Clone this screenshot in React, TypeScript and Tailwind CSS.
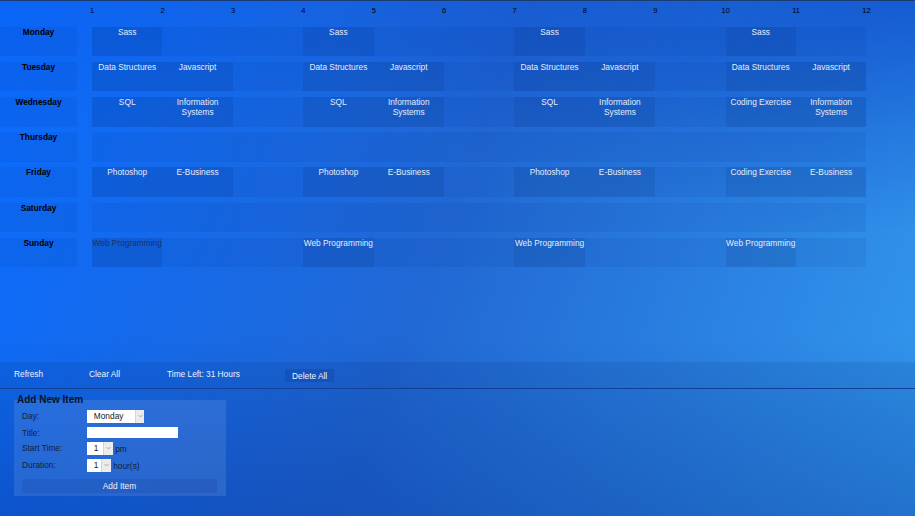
import { useState } from 'react'

type Slot = { title: string; dark?: boolean } | null

const s = (title: string, dark?: boolean): Slot => ({ title, dark })

const HOURS = Array.from({ length: 12 }, (_, i) => i + 1)

const DAYS: { name: string; slots: Slot[] }[] = [
  { name: 'Monday', slots: [s('Sass'), null, null, s('Sass'), null, null, s('Sass'), null, null, s('Sass'), null] },
  { name: 'Tuesday', slots: [s('Data Structures'), s('Javascript'), null, s('Data Structures'), s('Javascript'), null, s('Data Structures'), s('Javascript'), null, s('Data Structures'), s('Javascript')] },
  { name: 'Wednesday', slots: [s('SQL'), s('Information Systems'), null, s('SQL'), s('Information Systems'), null, s('SQL'), s('Information Systems'), null, s('Coding Exercise'), s('Information Systems')] },
  { name: 'Thursday', slots: Array(11).fill(null) },
  { name: 'Friday', slots: [s('Photoshop'), s('E-Business'), null, s('Photoshop'), s('E-Business'), null, s('Photoshop'), s('E-Business'), null, s('Coding Exercise'), s('E-Business')] },
  { name: 'Saturday', slots: Array(11).fill(null) },
  { name: 'Sunday', slots: [s('Web Programming', true), null, null, s('Web Programming'), null, null, s('Web Programming'), null, null, s('Web Programming'), null] },
]

function Chevron() {
  return (
    <svg width="5" height="4" viewBox="0 0 5 4" fill="none">
      <path d="M0.5 1 L2.5 3 L4.5 1" stroke="#9a9a9a" strokeWidth="0.8" />
    </svg>
  )
}

function FakeSelect({ value, options, width }: { value: string; options: string[]; width: string }) {
  const [v, setV] = useState(value)
  return (
    <div className={`flex h-[13.3px] bg-white ${width}`}>
      <select
        value={v}
        onChange={e => setV(e.target.value)}
        className="appearance-none flex-1 min-w-0 bg-white pl-[6.5px] text-[8.33px] leading-[13px] text-[#1a1a1a] outline-none"
      >
        {options.map(o => <option key={o} value={o}>{o}</option>)}
      </select>
      <span className="w-[9.5px] bg-[#ebebeb] border-l border-[#d4d4d4] flex items-center justify-center">
        <Chevron />
      </span>
    </div>
  )
}

export default function App() {
  return (
    <div className="h-[516px] w-full overflow-hidden flex flex-col font-['Liberation_Sans',Arial,sans-serif] text-[8.33px] leading-[10px] border-t border-[#1c3b72] bg-[radial-gradient(ellipse_65%_45%_at_100%_0%,rgba(10,70,200,0.6)_0%,rgba(10,70,200,0)_100%),linear-gradient(180deg,rgba(8,70,210,0.2)_0%,rgba(8,70,210,0)_25%),linear-gradient(0deg,rgba(5,50,160,0.3)_0%,rgba(5,50,160,0)_35%),linear-gradient(110deg,#0a6cff_0%,#2168d4_48%,#3399ee_100%)]">

      {/* Schedule */}
      <div className="h-[361px] shrink-0">
        <div className="flex h-[25.7px] pl-[57px] pt-[4.5px] text-[7.5px] text-black">
          {HOURS.map(h => <div key={h} className="w-[70.4px] text-center">{h}</div>)}
        </div>
        <div className="flex flex-col gap-[5.7px]">
          {DAYS.map(day => (
            <div key={day.name} className="flex h-[29.5px]">
              <div className="w-[77px] bg-[rgba(0,30,110,0.07)] text-center font-bold text-black">{day.name}</div>
              <div className="ml-[15px] flex bg-[rgba(0,30,110,0.07)]">
                {day.slots.map((slot, i) => (
                  <div
                    key={i}
                    className={`w-[70.4px] text-center whitespace-pre-line ${slot ? 'bg-[rgba(0,25,90,0.1)]' : ''} ${slot?.dark ? 'text-[#1e3358]' : 'text-[#e4ecf9]'}`}
                  >
                    {slot?.title === 'Information Systems' ? 'Information\nSystems' : <span className="whitespace-nowrap">{slot?.title}</span>}
                  </div>
                ))}
              </div>
            </div>
          ))}
        </div>
      </div>

      {/* Toolbar */}
      <div className="h-[27px] shrink-0 flex items-start bg-[rgba(0,25,90,0.1)] border-b-[1.5px] border-[#0f3f96] text-[#eef3ff]">
        <span className="ml-[14px] mt-[6.5px] w-[75px]">Refresh</span>
        <span className="mt-[6.5px] w-[78px]">Clear All</span>
        <span className="mt-[6.5px] w-[118px]">Time Left: 31 Hours</span>
        <button className="mt-[6.5px] h-[13.5px] px-[7px] bg-[rgba(0,30,100,0.14)] leading-[13.5px] pt-[1px]">Delete All</button>
      </div>

      {/* Add form */}
      <div className="flex-1 bg-[rgba(0,20,80,0.08)] pl-[14px] pt-[5px]">
        <fieldset className="w-[211.7px] bg-[rgba(255,255,255,0.1)] border-0 m-0 p-0 pb-[3.4px] text-[#14203d]">
          <legend className="pl-[3px] text-[10px] leading-[11.5px] font-bold text-[#0a1228]">Add New Item</legend>
          <div className="pl-[8px] pt-[4px] flex flex-col">
            <div className="flex h-[17.3px]">
              <span className="w-[65.3px] pt-[1px]">Day:</span>
              <FakeSelect value="Monday" width="w-[57px]" options={['Monday', 'Tuesday', 'Wednesday', 'Thursday', 'Friday', 'Saturday', 'Sunday']} />
            </div>
            <div className="flex h-[15px]">
              <span className="w-[65.3px] pt-[1px]">Title:</span>
              <input className="h-[11.7px] w-[90.4px] bg-white outline-none" />
            </div>
            <div className="flex h-[17px]">
              <span className="w-[65.3px] pt-[1px]">Start Time:</span>
              <FakeSelect value="1" width="w-[25.4px]" options={HOURS.map(String)} />
              <span className="ml-[2.5px] pt-[2px]">pm</span>
            </div>
            <div className="flex h-[20px]">
              <span className="w-[65.3px] pt-[1px]">Duration:</span>
              <FakeSelect value="1" width="w-[23.4px]" options={HOURS.map(String)} />
              <span className="ml-[2.5px] pt-[2px]">hour(s)</span>
            </div>
          </div>
          <button className="mx-[7.7px] w-[195.6px] h-[14px] bg-[rgba(0,30,100,0.1)] text-[#eef3ff] leading-[14px]">Add Item</button>
        </fieldset>
      </div>
    </div>
  )
}
